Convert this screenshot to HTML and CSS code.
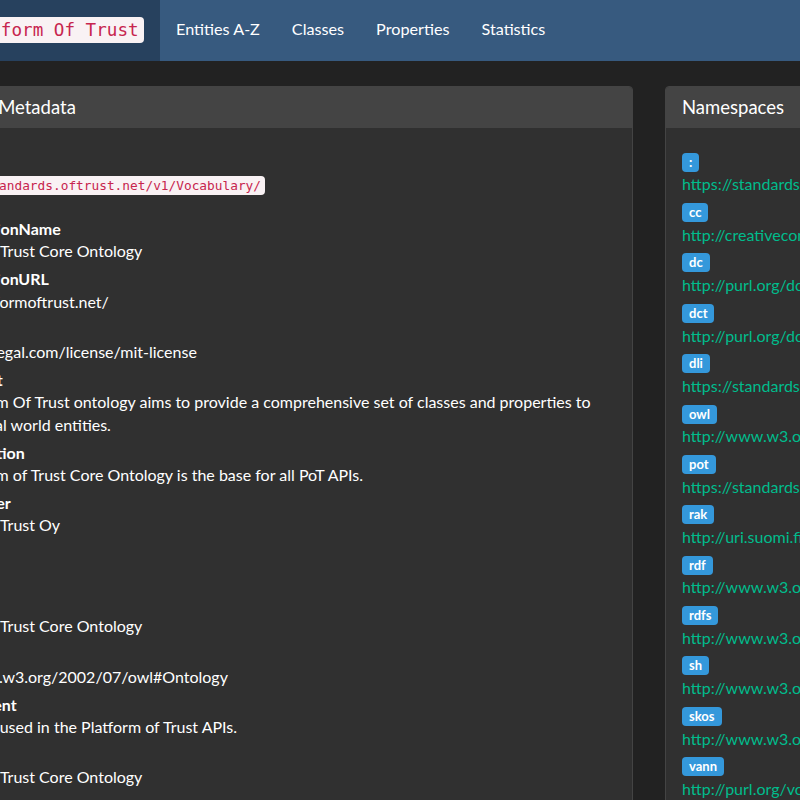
FILE: index.html
```html
<!DOCTYPE html>
<html lang="en">
<head>
<meta charset="utf-8">
<title>Platform Of Trust Vocabulary</title>
<link rel="stylesheet" href="styles.css">
</head>
<body>
<nav class="navbar">
  <a class="brand" href="#"><code>Platform Of Trust</code></a>
  <ul class="nav">
    <li><a href="#">Entities A-Z</a></li>
    <li><a href="#">Classes</a></li>
    <li><a href="#">Properties</a></li>
    <li><a href="#">Statistics</a></li>
  </ul>
</nav>
<main class="main">
  <section class="card card-meta">
    <h5 class="card-header">Ontology Metadata</h5>
    <dl class="card-body meta">
      <div class="entry first"><dt>@vocab</dt><dd><code>https://standards.oftrust.net/v1/Vocabulary/</code></dd></div>
      <div class="entry"><dt>dli:publicationName</dt><dd>Platform of Trust Core Ontology</dd></div>
      <div class="entry"><dt>dli:publicationURL</dt><dd>https://platformoftrust.net/</dd></div>
      <div class="entry"><dt>dct:license</dt><dd>https://tldrlegal.com/license/mit-license</dd></div>
      <div class="entry"><dt>dct:abstract</dt><dd>The Platform Of Trust ontology aims to provide a comprehensive set of classes and properties to describe real world entities.</dd></div>
      <div class="entry"><dt>dct:description</dt><dd>The Platform of Trust Core Ontology is the base for all PoT APIs.</dd></div>
      <div class="entry"><dt>dct:publisher</dt><dd>Platform of Trust Oy</dd></div>
      <div class="entry"><dt>version</dt><dd>v1</dd></div>
      <div class="entry"><dt>dct:title</dt><dd>Platform of Trust Core Ontology</dd></div>
      <div class="entry"><dt>@type</dt><dd>http://www.w3.org/2002/07/owl#Ontology</dd></div>
      <div class="entry"><dt>rdfs:comment</dt><dd>Vocabulary used in the Platform of Trust APIs.</dd></div>
      <div class="entry"><dt>rdfs:label</dt><dd>Platform of Trust Core Ontology</dd></div>
    </dl>
  </section>
  <section class="card card-ns">
    <h5 class="card-header">Namespaces</h5>
    <ul class="card-body ns">
      <li><div class="ns-key"><span class="badge">:</span></div><a href="#">https://standards.oftrust.net/v1/Vocabulary/</a></li>
      <li><div class="ns-key"><span class="badge">cc</span></div><a href="#">http://creativecommons.org/ns#</a></li>
      <li><div class="ns-key"><span class="badge">dc</span></div><a href="#">http://purl.org/dc/elements/1.1/</a></li>
      <li><div class="ns-key"><span class="badge">dct</span></div><a href="#">http://purl.org/dc/terms/</a></li>
      <li><div class="ns-key"><span class="badge">dli</span></div><a href="#">https://standards.oftrust.net/v1/dli/</a></li>
      <li><div class="ns-key"><span class="badge">owl</span></div><a href="#">http://www.w3.org/2002/07/owl#</a></li>
      <li><div class="ns-key"><span class="badge">pot</span></div><a href="#">https://standards.oftrust.net/v1/Vocabulary/</a></li>
      <li><div class="ns-key"><span class="badge">rak</span></div><a href="#">http://uri.suomi.fi/datamodel/ns/rak#</a></li>
      <li><div class="ns-key"><span class="badge">rdf</span></div><a href="#">http://www.w3.org/1999/02/22-rdf-syntax-ns#</a></li>
      <li><div class="ns-key"><span class="badge">rdfs</span></div><a href="#">http://www.w3.org/2000/01/rdf-schema#</a></li>
      <li><div class="ns-key"><span class="badge">sh</span></div><a href="#">http://www.w3.org/ns/shacl#</a></li>
      <li><div class="ns-key"><span class="badge">skos</span></div><a href="#">http://www.w3.org/2004/02/skos/core#</a></li>
      <li><div class="ns-key"><span class="badge">vann</span></div><a href="#">http://purl.org/vocab/vann/</a></li>
      <li><div class="ns-key"><span class="badge">xsd</span></div><a href="#">http://www.w3.org/2001/XMLSchema#</a></li>
    </ul>
  </section>
</main>
</body>
</html>
```
FILE: styles.css
```css
html, body {
  margin: 0;
  padding: 0;
}
body {
  width: 800px;
  height: 800px;
  overflow: hidden;
  background: #222222;
  color: #ffffff;
  font-family: Lato, "Noto Sans", "Liberation Sans", sans-serif;
  font-size: 16px;
  line-height: 1.4;
}

/* navbar */
.navbar {
  display: flex;
  height: 61px;
  background: #375a7f;
  margin-left: -63px;
  width: 1200px;
}
.brand {
  display: flex;
  align-items: center;
  padding: 0 16px 1px;
  background: #27415e;
  text-decoration: none;
}
.brand code {
  display: inline-block;
  font-family: "DejaVu Sans Mono", "Liberation Mono", monospace;
  font-size: 17.6px;
  line-height: 26px;
  padding: 0 5.5px;
  color: #c7254e;
  background: #f9f2f4;
  border-radius: 4px;
}
.nav {
  display: flex;
  align-items: center;
  list-style: none;
  margin: 0;
  padding: 0 0 2px;
}
.nav a {
  display: block;
  padding: 0 16px;
  font-size: 16.2px;
  color: #ffffff;
  text-decoration: none;
}

/* layout */
.main {
  display: flex;
  align-items: flex-start;
  gap: 32px;
  padding-top: 25px;
  margin-left: -99px;
}
.card {
  box-sizing: border-box;
  flex: none;
  background: #303030;
  border: 1px solid #444444;
  border-radius: 4px;
  overflow: hidden;
}
.card-meta { width: 732px; }
.card-ns { width: 350px; }
.card-header {
  margin: 0;
  padding: 9.25px 16px;
  background: #444444;
  font-size: 18.5px;
  font-weight: 400;
  line-height: 22.5px;
}
.card-body {
  margin: 0;
  padding: 23px 16px 20px;
}

/* metadata list */
.meta dt {
  font-weight: 700;
}
.meta dd {
  margin: 0 0 5.6px;
}
.meta .first dd {
  margin-bottom: 22px;
}
.meta code {
  font-family: "DejaVu Sans Mono", "Liberation Mono", monospace;
  font-size: 12.8px;
  padding: 2px 4px;
  color: #c7254e;
  background: #f9f2f4;
  border-radius: 4px;
}

/* namespaces */
.ns {
  list-style: none;
}
.ns li {
  margin-bottom: 5.6px;
}
.ns-key {
  display: flex;
  align-items: center;
  height: 22.4px;
}
.badge {
  display: block;
  padding: 3px 7px;
  font-size: 13px;
  font-weight: 700;
  line-height: 1;
  color: #ffffff;
  background: #3498db;
  border-radius: 4px;
}
.ns a {
  display: block;
  color: #00bc8c;
  text-decoration: none;
  white-space: nowrap;
}
```
